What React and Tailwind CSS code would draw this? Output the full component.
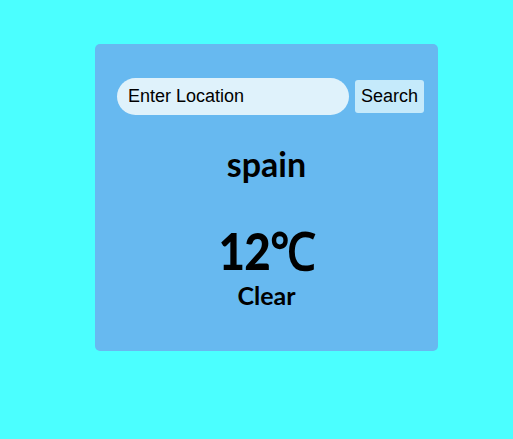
export default function App() {
  return (
    <div className="min-h-[439px] w-full bg-[#4bffff] pt-[44px] pl-[95px]">
      <div className="w-[343px] h-[307px] rounded-[5px] bg-[#67b9f0] pl-[22px] pr-[14px] pt-[34px] flex flex-col items-stretch">
        <div className="flex items-center gap-[6px]">
          <input
            placeholder="Enter Location"
            className="w-[232px] h-[37px] shrink-0 rounded-full bg-[#dff2fb] px-[11px] text-[18px] text-black placeholder:text-black outline-none"
            style={{ fontFamily: '"Liberation Sans", Arial, sans-serif' }}
          />
          <button
            className="w-[69px] h-[33px] shrink-0 rounded-[3px] bg-[#c5eafb] text-[18px] text-black"
            style={{ fontFamily: '"Liberation Sans", Arial, sans-serif' }}
          >
            Search
          </button>
        </div>
        <div className="flex flex-col items-center text-black font-bold ml-[-8px]" style={{ fontFamily: 'Lato, sans-serif' }}>
          <div className="text-[34px] leading-none mt-[32px]">spain</div>
          <div className="text-[52px] leading-none mt-[43px] font-black tracking-[-1px] scale-x-[0.88]">12℃</div>
          <div className="text-[25px] leading-none mt-[7px]">Clear</div>
        </div>
      </div>
    </div>
  );
}
